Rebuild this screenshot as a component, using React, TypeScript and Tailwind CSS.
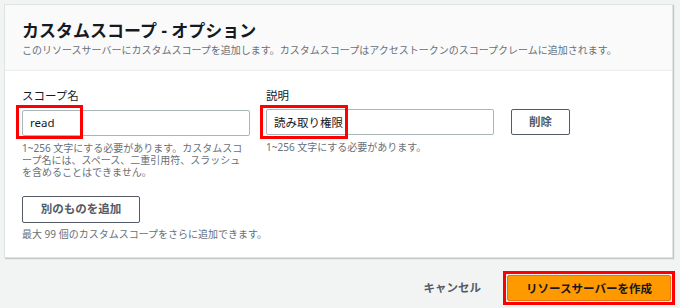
import React from "react";

const font = { fontFamily: '"Noto Sans", "Noto Sans CJK JP", sans-serif' };

function Field({ label, value, hint, boxWidth }: { label: string; value: string; hint: React.ReactNode; boxWidth: string }) {
  return (
    <div className="flex flex-col w-[228px]">
      <label className="text-[11.5px] leading-[16px] text-[#16191f]">{label}</label>
      <div className="relative mt-[5px]">
        <input
          readOnly
          value={value}
          className="w-full h-[26px] border border-[#aab7b8] rounded-[2px] px-[7px] text-[11.5px] text-[#16191f] outline-none bg-white"
        />
        <div className={`absolute -left-[6px] -top-[4px] h-[34px] border-[3px] border-[#f00] pointer-events-none ${boxWidth}`} />
      </div>
      <p className="mt-[6px] text-[10px] leading-[12px] text-[#687078]">{hint}</p>
    </div>
  );
}

export default function App() {
  return (
    <div className="w-[680px] h-[308px] bg-[#f2f3f3] pt-[4px] pl-[4px] pr-[7px] flex flex-col" style={font}>
      <div className="bg-white border border-[#dfe3e3] shadow-[1px_1px_1px_0_rgba(0,28,36,0.2)]">
        <div className="bg-[#fafafa] border-b border-[#eaeded] pl-[17px] pt-[15px] h-[66px]">
          <h2 className="text-[17px] leading-[22px] font-bold text-[#16191f]">カスタムスコープ - オプション</h2>
          <p className="text-[10px] leading-[14px] text-[#687078] mt-[1px]">
            このリソースサーバーにカスタムスコープを追加します。カスタムスコープはアクセストークンのスコープクレームに追加されます。
          </p>
        </div>
        <div className="pl-[17px] pt-[17px] pb-[17px]">
          <div className="flex items-start gap-[16px]">
            <Field
              label="スコープ名"
              value="read"
              boxWidth="w-[67px]"
              hint={<>1~256 文字にする必要があります。カスタムスコープ名には、スペース、二重引用符、スラッシュを含めることはできません。</>}
            />
            <Field label="説明" value="読み取り権限" boxWidth="w-[88px]" hint="1~256 文字にする必要があります。" />
            <button className="mt-[21px] ml-[1px] h-[26px] w-[59px] border border-[#545b64] rounded-[2px] bg-white text-[11.5px] font-bold text-[#545b64]">
              削除
            </button>
          </div>
          <button className="mt-[18px] h-[27px] w-[118px] border border-[#545b64] rounded-[2px] bg-white text-[11.5px] font-bold text-[#545b64]">
            別のものを追加
          </button>
          <p className="mt-[5px] text-[10px] leading-[12px] text-[#687078]">最大 99 個のカスタムスコープをさらに追加できます。</p>
        </div>
      </div>
      <div className="flex justify-end items-center mt-[17px] pr-[2px] gap-[22px]">
        <button className="px-[4px] h-[26px] text-[11.5px] font-bold text-[#545b64]">キャンセル</button>
        <div className="relative">
          <button className="h-[26px] w-[164px] bg-[#ff9900] border border-[#ec7211] rounded-[2px] text-[11.5px] font-bold text-[#16191f]">
            リソースサーバーを作成
          </button>
          <div className="absolute -left-[4px] -top-[4px] -right-[4px] -bottom-[4px] border-[3px] border-[#f00] pointer-events-none" />
        </div>
      </div>
    </div>
  );
}
